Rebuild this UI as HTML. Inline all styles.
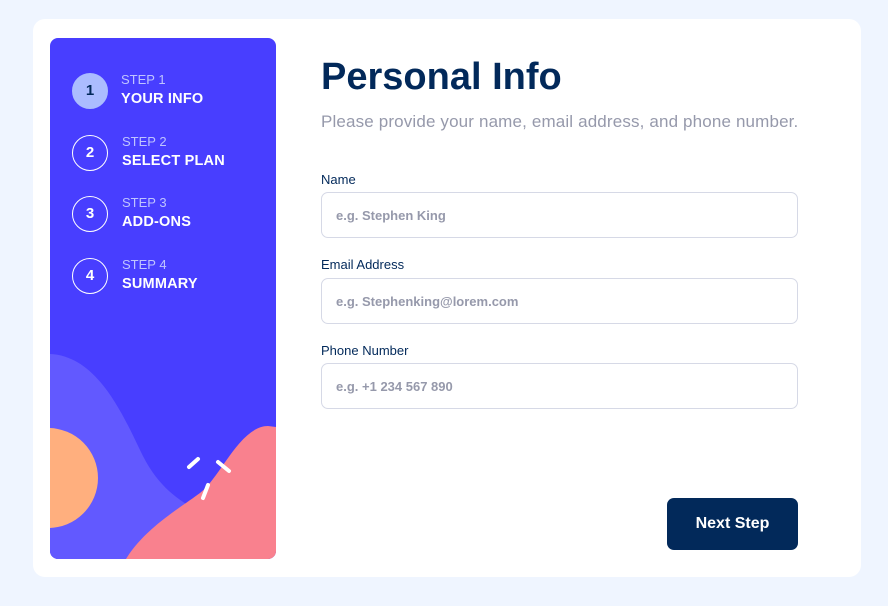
<!DOCTYPE html>
<html><head><style>
*{margin:0;padding:0;box-sizing:border-box}
body{width:888px;height:606px;background:#eff5ff;font-family:"Liberation Sans","DejaVu Sans",sans-serif;position:relative;overflow:hidden}
.card{position:absolute;left:33px;top:19px;width:828px;height:558px;background:#fff;border-radius:12px}
.side{position:absolute;left:50px;top:38px;width:226px;height:521px;background:#483eff;border-radius:8px;overflow:hidden}
.step{position:absolute;left:22px;display:flex;align-items:center}
.num{width:36px;height:36px;border:1.5px solid #fff;border-radius:50%;color:#fff;font-weight:bold;font-size:15px;display:flex;align-items:center;justify-content:center}
.num.act{border-color:#abbcff;background:#abbcff;color:#02295a}
.lab{margin-left:14px}
.lab .s{color:#bfc4ff;font-size:13px;line-height:18px}
.lab .t{color:#fff;font-weight:bold;font-size:14.5px;line-height:21px;letter-spacing:.2px}
h1{position:absolute;left:321px;top:56px;font-size:38px;color:#02295a;font-weight:bold}
.sub{position:absolute;left:321px;top:112px;font-size:17px;color:#9699ab;letter-spacing:.15px}
.lbl{position:absolute;left:321px;font-size:13px;color:#02295a}
.inp{position:absolute;left:321px;width:477px;height:46px;border:1px solid #d6d9e6;border-radius:7px;padding-left:14px;display:flex;align-items:center;font-size:13px;font-weight:bold;color:#9699ab}
.btn{position:absolute;left:667px;top:498px;width:131px;height:52px;background:#02295a;border-radius:7px;color:#fff;font-weight:bold;font-size:16px;display:flex;align-items:center;justify-content:center}
</style></head><body>
<div class="card"></div>
<div class="side">
<svg width="226" height="521" style="position:absolute;left:0;top:0">
<path d="M0,316 C45,318 70,370 90,412 C110,455 135,465 160,480 L160,521 L0,521Z" fill="#6259ff"/>
<circle cx="-2" cy="440" r="50" fill="#ffaf7e"/>
<path d="M76,521 C95,490 130,470 150,455 C170,440 190,388 218,388 L226,389 L226,521Z" fill="#f9818e"/>
<g stroke="#fff" stroke-width="4" stroke-linecap="round">
<line x1="139" y1="429" x2="148" y2="421"/>
<line x1="168" y1="424" x2="179" y2="433"/>
<line x1="153" y1="460" x2="158" y2="447"/>
</g>
</svg>
<div class="step" style="top:33px"><div class="num act">1</div><div class="lab" style="margin-left:13px"><div class="s">STEP 1</div><div class="t">YOUR INFO</div></div></div>
<div class="step" style="top:95px"><div class="num">2</div><div class="lab"><div class="s">STEP 2</div><div class="t">SELECT PLAN</div></div></div>
<div class="step" style="top:156px"><div class="num">3</div><div class="lab"><div class="s">STEP 3</div><div class="t">ADD-ONS</div></div></div>
<div class="step" style="top:218px"><div class="num">4</div><div class="lab"><div class="s">STEP 4</div><div class="t">SUMMARY</div></div></div>
</div>
<h1>Personal Info</h1>
<div class="sub">Please provide your name, email address, and phone number.</div>
<div class="lbl" style="top:172px">Name</div>
<div class="inp" style="top:192px">e.g. Stephen King</div>
<div class="lbl" style="top:257px">Email Address</div>
<div class="inp" style="top:278px">e.g. Stephenking@lorem.com</div>
<div class="lbl" style="top:343px">Phone Number</div>
<div class="inp" style="top:363px">e.g. +1 234 567 890</div>
<div class="btn">Next Step</div>
</body></html>
